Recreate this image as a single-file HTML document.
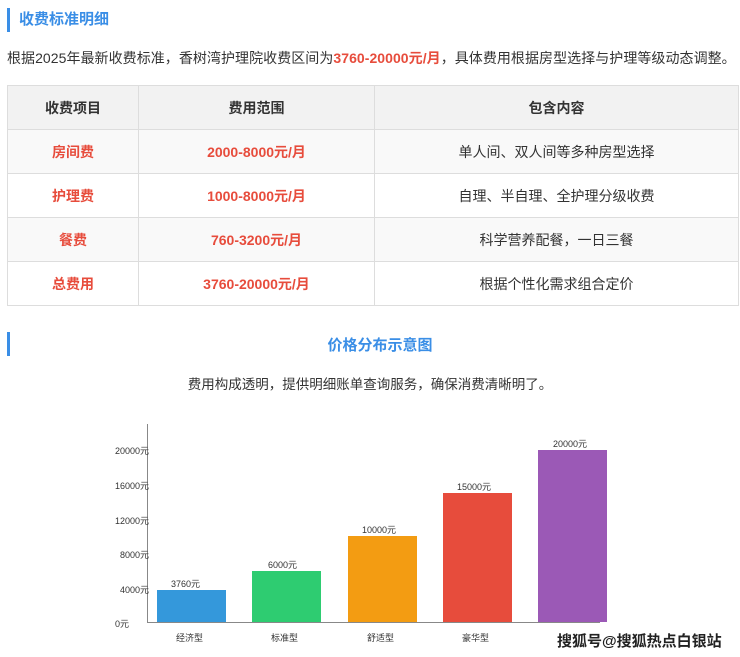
<!DOCTYPE html><html><head><meta charset="utf-8"><style>
body{margin:0;width:740px;height:657px;background:#fff;font-family:"Liberation Sans","Noto Sans CJK SC",sans-serif;color:#333;position:relative;overflow:hidden}
.h{position:absolute;left:7px;border-left:3px solid #3a8ee6;padding-left:9px;color:#3a8ee6;font-weight:bold;font-size:15px;line-height:24px}
.p{position:absolute;font-size:13.5px;color:#333}
table{position:absolute;left:7px;top:85px;width:732px;border-collapse:collapse;font-size:14px}
td,th{border:1px solid #ddd;text-align:center;height:43px;padding:0}
th{background:#f2f2f2;font-weight:bold;color:#333}
tr.g td{background:#f9f9f9}
.r{color:#e74c3c;font-weight:bold}
.c{position:absolute;font-size:9px;color:#333;font-family:"Liberation Sans","Noto Sans CJK SC",sans-serif}
.bar{position:absolute;width:69px}
</style></head><body>
<div class="h" style="top:8px">收费标准明细</div>
<div class="p" style="left:7px;top:48px;font-size:14px;letter-spacing:0.05px">根据2025年最新收费标准，香树湾护理院收费区间为<span class="r">3760-20000元/月</span>，具体费用根据房型选择与护理等级动态调整。</div>
<table>
<tr><th style="width:130px">收费项目</th><th style="width:235px">费用范围</th><th>包含内容</th></tr>
<tr class="g"><td class="r">房间费</td><td class="r">2000-8000元/月</td><td>单人间、双人间等多种房型选择</td></tr>
<tr><td class="r">护理费</td><td class="r">1000-8000元/月</td><td>自理、半自理、全护理分级收费</td></tr>
<tr class="g"><td class="r">餐费</td><td class="r">760-3200元/月</td><td>科学营养配餐，一日三餐</td></tr>
<tr><td class="r">总费用</td><td class="r">3760-20000元/月</td><td>根据个性化需求组合定价</td></tr>
</table>
<div class="h" style="top:332px;left:7px;width:0;padding:0;height:24px"></div>
<div style="position:absolute;left:0;width:760px;top:334px;text-align:center;color:#3a8ee6;font-weight:bold;font-size:15px">价格分布示意图</div>
<div class="p" style="left:0;width:740px;top:373px;text-align:center">费用构成透明，提供明细账单查询服务，确保消费清晰明了。</div>
<div style="position:absolute;left:147px;top:424px;width:1px;height:199px;background:#888"></div>
<div style="position:absolute;left:147px;top:622px;width:453px;height:1px;background:#888"></div>
<div class="c" style="left:115px;top:444px">20000元</div>
<div class="c" style="left:115px;top:479px">16000元</div>
<div class="c" style="left:115px;top:514px">12000元</div>
<div class="c" style="left:120px;top:548px">8000元</div>
<div class="c" style="left:120px;top:583px">4000元</div>
<div class="c" style="left:115px;top:617px">0元</div>
<div class="bar" style="left:157px;top:590px;height:32px;background:#3498db"></div>
<div class="bar" style="left:252px;top:571px;height:51px;background:#2ecc71"></div>
<div class="bar" style="left:348px;top:536px;height:86px;background:#f39c12"></div>
<div class="bar" style="left:443px;top:493px;height:129px;background:#e74c3c"></div>
<div class="bar" style="left:538px;top:450px;height:172px;background:#9b59b6"></div>
<div class="c" style="left:171px;top:577px">3760元</div>
<div class="c" style="left:268px;top:558px">6000元</div>
<div class="c" style="left:362px;top:523px">10000元</div>
<div class="c" style="left:457px;top:480px">15000元</div>
<div class="c" style="left:553px;top:437px">20000元</div>
<div class="c" style="left:176px;top:631px">经济型</div>
<div class="c" style="left:271px;top:631px">标准型</div>
<div class="c" style="left:367px;top:631px">舒适型</div>
<div class="c" style="left:462px;top:631px">豪华型</div>
<div style="position:absolute;left:557px;top:630px;font-size:15px;font-weight:bold;color:#222">搜狐号@搜狐热点白银站</div>
</body></html>
